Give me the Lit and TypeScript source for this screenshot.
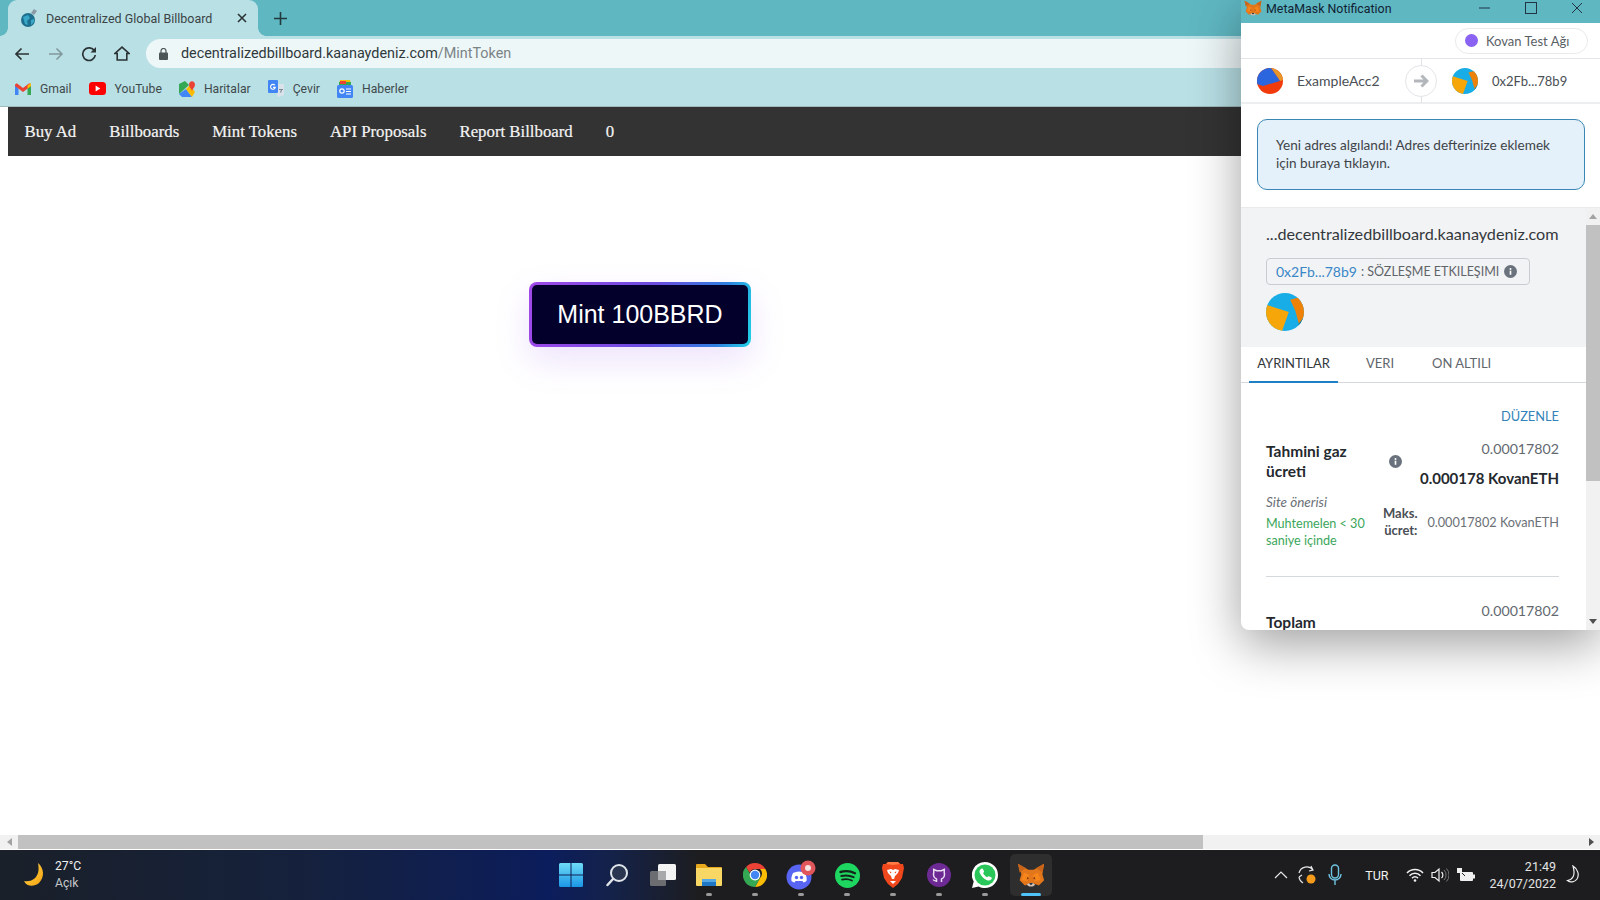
import { LitElement, html, css } from 'lit';
import { customElement } from 'lit/decorators.js';

const fox = (s: number) => html`<svg width=${s} height=${s} viewBox="0 0 32 32">
  <path fill="#e2761b" d="M1 3l12 7h6l12-7-2 12 2 7-6 6-5-2h-6l-5 2-6-6 2-7z" />
  <path fill="#c9651a" d="M1 3l9 5-7 5zM31 3l-9 5 7 5z" />
  <path fill="#f6851b" d="M8 13l6 3-2 7-7-1zM24 13l-6 3 2 7 7-1z" />
  <path fill="#763d16" d="M12 18l2 2-3 1zM20 18l-2 2 3 1z" />
  <path fill="#e4761b" d="M14 15h4l1 7h-6z" />
  <path fill="#d7c1b3" d="M11 27l3 2h4l3-2-3-2h-4z" />
  <path fill="#233447" d="M14 25h4l-1 2h-2z" />
</svg>`;

const infoIcon = (s: number) => html`<svg width=${s} height=${s} viewBox="0 0 16 16">
  <circle cx="8" cy="8" r="8" fill="#6a737d" />
  <rect x="7" y="7" width="2" height="5" fill="#fff" />
  <circle cx="8" cy="4.8" r="1.2" fill="#fff" />
</svg>`;

const srcAvatar = html`<svg width="26" height="26" viewBox="0 0 26 26">
  <defs><clipPath id="a1"><circle cx="13" cy="13" r="13" /></clipPath></defs>
  <g clip-path="url(#a1)">
    <rect width="26" height="26" fill="#f23b0c" />
    <path fill="#e8952a" d="M14 0h12v12l-3 1z" />
    <path fill="#2b66de" d="M0 0h14l9 13-17 5-6-2z" />
  </g>
</svg>`;

const destAvatar = (s: number, id: string) => html`<svg width=${s} height=${s} viewBox="0 0 26 26">
  <defs><clipPath id=${id}><circle cx="13" cy="13" r="13" /></clipPath></defs>
  <g clip-path="url(#${id})">
    <rect width="26" height="26" fill="#18ade6" />
    <path fill="#f6a609" d="M0 8l15.600 5L11 26H0z" />
    <path fill="#ee8208" d="M16.500 4.600L26 2v14.500L22.500 21 20 12z" />
    <path fill="#0f6e8c" d="M22.500 21L26 16.500V20l-4 2z" />
  </g>
</svg>`;

const favicon = html`<svg width="18" height="20" viewBox="0 0 18 20">
  <circle cx="8" cy="12" r="7" fill="#1d6f8f" />
  <path fill="#39a7c6" d="M3 9l5-2 2 3-3 3 1 4-3-1zM11 12l3-1 0 3-3 3z" />
  <path fill="#8a9aa4" d="M11 5l3-4 3 2-3 4z" />
</svg>`;

const gmail = html`<svg width="16" height="12" viewBox="0 0 16 12">
  <path fill="#4285f4" d="M0 2v10h3.500V5z" />
  <path fill="#34a853" d="M16 2v10h-3.500V5z" />
  <path fill="#ea4335" d="M0 1.500L1.800.3 8 5 14.200.3 16 1.500v1.600L8 9 0 3.100z" />
  <path fill="#fbbc04" d="M12.500 2.400L16 0v3.100L12.500 5.700z" />
</svg>`;

const youtube = html`<svg width="17" height="13" viewBox="0 0 18 13" preserveAspectRatio="none">
  <rect width="18" height="13" rx="3.500" fill="#f00" />
  <path fill="#fff" d="M7 3.500v6l5-3z" />
</svg>`;

const maps = html`<svg width="16" height="16" viewBox="0 0 16 16">
  <path fill="#34a853" d="M0 3l6-3 4 4-10 9z" />
  <path fill="#4285f4" d="M0 13l7-5 6 8H3z" />
  <path fill="#fbbc04" d="M7 8l4-4 5 7-3 5z" />
  <path fill="#ea4335" d="M10 4c0-5 6-5 6 0 0 2-2 3-3 6-1-3-3-4-3-6z" />
</svg>`;

const translate = html`<svg width="16" height="17" viewBox="0 0 16 17">
  <path fill="#dbe3ea" d="M6 4h10v11l-6 2z" />
  <rect width="10" height="13" rx="1" fill="#4285f4" />
  <path fill="none" stroke="#fff" stroke-width="1.100" d="M6.800 5.200A2.400 2.400 0 1 0 7.300 7.400H5" />
  <path fill="#7a8794" d="M11 9h4v1h-1l-1 3-1-1 1-2h-2z" />
</svg>`;

const news = html`<svg width="16" height="18" viewBox="0 0 16 18">
  <path fill="#fbbc04" d="M3 0h10l1 5H2z" />
  <path fill="#34a853" d="M2 2h12v3H2z" />
  <path fill="#ea4335" d="M3 1h6v3H3z" />
  <rect y="5" width="16" height="13" rx="1.500" fill="#4285f4" />
  <circle cx="5" cy="11" r="2.200" fill="none" stroke="#fff" stroke-width="1.200" />
  <path stroke="#fff" stroke-width="1.200" d="M9 9h5M9 11.500h5M9 14h5" />
</svg>`;

const winLogo = html`<svg width="24" height="24" viewBox="0 0 24 24">
  <defs><linearGradient id="w" x1="0" y1="0" x2="0" y2="1"><stop offset="0" stop-color="#6fdcf7" /><stop offset="1" stop-color="#1b96e6" /></linearGradient></defs>
  <path fill="url(#w)" d="M0 1.500A1.500 1.500 0 0 1 1.500 0h10v11.500H0zM12.500 0h10A1.500 1.500 0 0 1 24 1.500v10H12.500zM0 12.500h11.500V24h-10A1.500 1.500 0 0 1 0 22.500zM12.500 12.500H24v10a1.500 1.500 0 0 1-1.500 1.500h-10z" />
</svg>`;

const search = html`<svg width="24" height="24" viewBox="0 0 24 24">
  <circle cx="14" cy="10" r="8" fill="#2a3550" stroke="#dfe5ea" stroke-width="2" />
  <path d="M8 16l-5.500 6" stroke="#dfe5ea" stroke-width="2.500" stroke-linecap="round" />
</svg>`;

const taskView = html`<svg width="26" height="22" viewBox="0 0 26 22">
  <rect x="0" y="7" width="16" height="15" rx="1.500" fill="#6b6d70" />
  <rect x="8" y="0" width="18" height="16" rx="1.500" fill="#f3f3f3" />
  <rect x="8" y="7" width="8" height="9" fill="#a6a8aa" />
</svg>`;

const files = html`<svg width="26" height="24" viewBox="0 0 26 24">
  <path fill="#e8a91c" d="M0 2a1 1 0 0 1 1-1h8l3 3h13a1 1 0 0 1 1 1v3H0z" />
  <path fill="#f8d765" d="M0 5h26v17a1 1 0 0 1-1 1H1a1 1 0 0 1-1-1z" />
  <path fill="#1f76c4" d="M6 16h14v7H6z" />
  <path fill="#54a8e4" d="M6 16h14v3H6z" />
</svg>`;

const chrome = html`<svg width="24" height="24" viewBox="0 0 24 24">
  <path fill="#ea4335" d="M12 0a12 12 0 0 1 10.400 6H12a6 6 0 0 0-5.500 3.600L3 4a12 12 0 0 1 9-4z" />
  <path fill="#fbbc04" d="M22.400 6A12 12 0 0 1 12 24l5-9a6 6 0 0 0 0-9z" />
  <path fill="#34a853" d="M3 4l6 10a6 6 0 0 0 8 1l-5 9A12 12 0 0 1 3 4z" />
  <circle cx="12" cy="12" r="5.400" fill="#fff" />
  <circle cx="12" cy="12" r="4.200" fill="#4285f4" />
</svg>`;

const discord = html`<svg width="30" height="30" viewBox="0 0 30 30">
  <circle cx="13" cy="17" r="12.500" fill="#5865f2" />
  <path fill="#fff" d="M7 13c4-2 8-2 12 0 1.500 3 2 5.500 1.500 8-1 .8-2 1.200-3 1.400l-1-1.400h-7l-1 1.400c-1-.2-2-.6-3-1.400-.5-2.500 0-5 1.500-8z" />
  <circle cx="10.500" cy="17.500" r="1.700" fill="#5865f2" />
  <circle cx="15.500" cy="17.500" r="1.700" fill="#5865f2" />
  <circle cx="22" cy="8" r="7.500" fill="#e0565b" />
  <circle cx="22" cy="8" r="3" fill="#f6e3e3" />
</svg>`;

const spotify = html`<svg width="25" height="25" viewBox="0 0 25 25">
  <circle cx="12.500" cy="12.500" r="12.500" fill="#1ed760" />
  <path fill="none" stroke="#14241a" stroke-linecap="round" stroke-width="2.400" d="M5.500 9c5-1.400 10-1 14.500 1.300" />
  <path fill="none" stroke="#14241a" stroke-linecap="round" stroke-width="2" d="M6.300 13c4.300-1.100 8.500-.7 12.300 1.200" />
  <path fill="none" stroke="#14241a" stroke-linecap="round" stroke-width="1.700" d="M7 16.600c3.500-.8 7-.5 10 1" />
</svg>`;

const brave = html`<svg width="22" height="26" viewBox="0 0 22 26">
  <path fill="#f1471d" d="M6 0h10l2 2 3 0 1 4-2 10-4 6-5 4-5-4-4-6L0 6l1-4 3 0z" />
  <path fill="#ff7a45" d="M6 0h10l2 2-7 1-7-1z" />
  <path fill="#fff" d="M5 8l4-1 2 1 2-1 4 1-1 3-3 3-1 3h-2l-1-3-3-3z" />
  <path fill="#f1471d" d="M7.500 9.500l2 .5-1 1.500zM14.500 9.500l-2 .5 1 1.500z" />
  <path fill="#fff" d="M8 19h6l-3 3z" />
</svg>`;

const github = html`<svg width="24" height="24" viewBox="0 0 24 24">
  <circle cx="12" cy="12" r="12" fill="#6e2a94" />
  <path fill="none" stroke="#e9dff0" stroke-width="1.500" d="M9.500 19v-3c-3-1-3.500-4.500-2.700-6.500L6.700 6.500l3 1.300h4.600l3-1.300-.1 3c.8 2 .3 5.500-2.700 6.500v3" />
  <path fill="none" stroke="#e9dff0" stroke-width="1.200" d="M6 16.500c1 1.500 2 1.500 3.500 1.200" />
</svg>`;

const whatsapp = html`<svg width="26" height="26" viewBox="0 0 26 26">
  <path fill="#fff" d="M13 0a13 13 0 0 1 0 26c-2.300 0-4.400-.6-6.300-1.600L0 26l1.700-6.500A13 13 0 0 1 13 0z" />
  <circle cx="13" cy="13" r="10.500" fill="#29c65a" />
  <path fill="#fff" d="M9 7c1-.8 1.700-.6 2.100.3l.9 2c.2.500 0 1-.9 1.900.9 1.800 2.200 3.100 4 4 .9-.9 1.400-1.100 1.900-.9l2 .9c.9.400 1.100 1.100.3 2.100-1 1.300-2.500 1.600-4.300.9C11.600 16.800 9.200 14.400 7.800 11 7.100 9.500 7.700 8 9 7z" />
</svg>`;

const moon = html`<svg width="22" height="24" viewBox="0 0 22 24">
  <defs><linearGradient id="m" x1="0" y1="0" x2="1" y2="1"><stop offset="0" stop-color="#ffd84d" /><stop offset="1" stop-color="#f5a10f" /></linearGradient></defs>
  <path fill="url(#m)" d="M14 0c6 5 7 14 1 20-5 4-12 4-15-2 7 1 12-2 14-8 .800-3 .800-6 0-10z" />
</svg>`;

const trayChevron = html`<svg width="14" height="8" viewBox="0 0 14 8"><path d="M1 7l6-6 6 6" fill="none" stroke="#e8e8e8" stroke-width="1.200" /></svg>`;
const traySync = html`<svg width="22" height="22" viewBox="0 0 22 22">
  <path d="M2 9a8 8 0 0 1 14-3M14 2l2 4-4 1M2 13a8 8 0 0 0 4 6M2 13l3-2" fill="none" stroke="#e5e5e5" stroke-width="1.200" />
  <circle cx="14" cy="15" r="4.500" fill="#f59b1c" />
</svg>`;
const trayMic = html`<svg width="14" height="22" viewBox="0 0 14 22">
  <rect x="3.500" y="1" width="7" height="13" rx="3.500" fill="none" stroke="#6fc3e0" stroke-width="1.400" />
  <path d="M1 10a6 6 0 0 0 12 0M7 16v5" fill="none" stroke="#6fc3e0" stroke-width="1.400" />
</svg>`;
const trayWifi = html`<svg width="18" height="14" viewBox="0 0 18 14">
  <path d="M1 5a11 11 0 0 1 16 0M3.500 7.700a7.500 7.500 0 0 1 11 0M6 10.200a4 4 0 0 1 6 0" fill="none" stroke="#f0f0f0" stroke-width="1.500" />
  <circle cx="9" cy="12.500" r="1.300" fill="#f0f0f0" />
</svg>`;
const traySound = html`<svg width="18" height="16" viewBox="0 0 18 16">
  <path d="M1 5.500h3l4-3.500v12l-4-3.500H1z" fill="none" stroke="#f0f0f0" stroke-width="1.200" />
  <path d="M10.500 5a4 4 0 0 1 0 6" fill="none" stroke="#f0f0f0" stroke-width="1.200" />
  <path d="M13 3a7 7 0 0 1 0 10M15.500 1.500a9.500 9.500 0 0 1 0 13" fill="none" stroke="#777" stroke-width="1" />
</svg>`;
const trayBattery = html`<svg width="18" height="14" viewBox="0 0 18 14">
  <rect x="3" y="4" width="13" height="9" rx="1" fill="#f0f0f0" />
  <rect x="16" y="6.500" width="2" height="4" fill="#f0f0f0" />
  <rect x="0" y="0" width="5" height="5" fill="#f0f0f0" />
  <path d="M5 5l3 3" stroke="#222" stroke-width="1" />
</svg>`;
const trayNight = html`<svg width="16" height="20" viewBox="0 0 16 20">
  <path d="M7 1c5 3 6.500 9 4 13-2 3-6.500 4-9.500 1.500C6 15 10 11 7 1z" fill="none" stroke="#f0f0f0" stroke-width="1.200" />
</svg>`;

const apps = [
  winLogo, search, taskView, files, chrome, discord, spotify, brave, github, whatsapp,
];
const navItems = ['Buy Ad', 'Billboards', 'Mint Tokens', 'API Proposals', 'Report Billboard', '0'];

@customElement('app-root')
export class AppRoot extends LitElement {
  static override styles = css`
    :host {
      display: block;
      position: relative;
      width: 1600px;
      height: 900px;
      overflow: hidden;
      background: #fff;
      font-family: 'Roboto', 'Noto Sans', sans-serif;
    }

    .screen {
      display: flex;
      flex-direction: column;
      height: 900px;
    }

    /* browser chrome */
    .tabstrip {
      display: flex;
      align-items: stretch;
      height: 36px;
      padding-left: 8px;
      background: #5fb7c2;
    }
    .tab {
      position: relative;
      display: flex;
      align-items: center;
      width: 250px;
      padding: 0 11px 0 12px;
      box-sizing: border-box;
      gap: 8px;
      border-radius: 9px 9px 0 0;
      background: #b9e0e5;
      color: #3a4446;
      font-size: 12.5px;
    }
    .tab::before,
    .tab::after {
      content: '';
      position: absolute;
      bottom: 0;
      width: 8px;
      height: 8px;
    }
    .tab::before {
      left: -8px;
      background: radial-gradient(circle at 0 0, transparent 7.500px, #b9e0e5 8px);
    }
    .tab::after {
      right: -8px;
      background: radial-gradient(circle at 100% 0, transparent 7.500px, #b9e0e5 8px);
    }
    .tab span {
      flex: 1;
      white-space: nowrap;
    }
    .newtab {
      display: flex;
      align-items: center;
      margin-left: 16px;
    }
    .toolbar {
      display: flex;
      align-items: center;
      height: 35px;
      padding-left: 14px;
      background: #b9e0e5;
    }
    .tbtn {
      display: flex;
      justify-content: center;
      width: 33.300px;
    }
    .tbtn.first {
      justify-content: flex-start;
      width: 25px;
    }
    .omnibox {
      flex: 1;
      display: flex;
      align-items: center;
      gap: 13px;
      height: 29px;
      margin-left: 7px;
      padding-left: 13px;
      border-radius: 15px 0 0 15px;
      background: #eef7f8;
      font-size: 14.400px;
      color: #2f3a3c;
    }
    .omnibox i {
      font-style: normal;
      color: #7b8486;
    }
    .bookmarks {
      display: flex;
      align-items: center;
      height: 35px;
      padding-left: 15px;
      background: #b9e0e5;
      font-size: 12.200px;
      color: #3f4a4c;
    }
    .bm {
      display: flex;
      align-items: center;
      gap: 9px;
      margin-right: 17px;
    }

    /* page */
    .page {
      flex: 1;
      min-height: 0;
      border-top: 1px solid #9fb8bc;
      padding-left: 8px;
      background: #fff;
    }
    .nav {
      display: flex;
      align-items: center;
      height: 48px;
      padding: 1px 0 0 16.500px;
      gap: 33px;
      background: #333;
      color: #f4f4f4;
      font-family: 'Liberation Serif', serif;
      font-size: 16.800px;
      -webkit-text-stroke: 0.2px #f4f4f4;
    }
    .stage {
      display: flex;
      justify-content: flex-start;
      padding: 126px 0 0 521px;
    }
    .mint {
      display: flex;
      align-items: center;
      justify-content: center;
      width: 222px;
      height: 65px;
      box-sizing: border-box;
      padding: 3px;
      border-radius: 8px;
      background: linear-gradient(100deg, #a149e8 0%, #6a4ce0 55%, #2f7fe0 85%, #20d2e6 100%);
      box-shadow: 0 14px 34px rgba(150, 90, 240, 0.17);
    }
    .mint span {
      display: flex;
      align-items: center;
      justify-content: center;
      width: 100%;
      height: 100%;
      border-radius: 5px;
      background: #03012c;
      color: #fff;
      font-family: 'Liberation Sans', sans-serif;
      font-size: 25px;
    }

    .hscroll {
      display: flex;
      align-items: center;
      height: 14px;
      background: #f1f1f1;
      border-bottom: 1px solid #fff;
    }
    .hscroll b {
      display: flex;
      align-items: center;
      justify-content: center;
      width: 18px;
      height: 100%;
    }
    .hscroll em {
      display: block;
      width: 1185px;
      height: 100%;
      background: #c1c1c1;
    }
    .hscroll u {
      flex: 1;
    }

    /* taskbar */
    .taskbar {
      display: grid;
      grid-template-columns: 1fr auto 1fr;
      align-items: center;
      height: 50px;
      background: linear-gradient(90deg, #1a2029 0, #15213c 300px, #0b1d5c 550px, #14224a 610px, #1d1d1f 700px);
      color: #f2f2f2;
    }
    .weather {
      display: flex;
      align-items: center;
      gap: 9px;
      padding-left: 24px;
    }
    .weather div {
      font-size: 12.200px;
      line-height: 17px;
    }
    .weather small {
      display: block;
      font-size: 12.200px;
      color: #c4c6c8;
    }
    .apps {
      display: flex;
      align-items: center;
    }
    .slot {
      position: relative;
      display: flex;
      align-items: center;
      justify-content: center;
      width: 46px;
      height: 42px;
      border-radius: 5px;
    }
    .slot.running::after {
      content: '';
      position: absolute;
      bottom: 0;
      width: 6px;
      height: 3px;
      border-radius: 2px;
      background: #9a9a9a;
    }
    .slot.active {
      width: 42px;
      margin-left: 2px;
      background: #2e2e2e;
    }
    .slot.active::after {
      width: 20px;
      background: #4fc3f7;
    }
    .tray {
      display: flex;
      align-items: center;
      justify-content: flex-end;
      padding-right: 18px;
      font-size: 12.5px;
    }
    .tray .sync {
      display: flex;
      margin: 0 9px 0 9px;
    }
    .tray .lang {
      margin: 0 18px 0 23px;
    }
    .tray .sound {
      display: flex;
      margin: 0 8px 0 7px;
    }
    .clock {
      margin: 0 10px 0 14px;
      text-align: right;
      line-height: 17px;
      font-size: 12.500px;
      color: #e4e4e4;
    }

    /* metamask window */
    .mm {
      position: absolute;
      left: 1241px;
      top: 0;
      display: flex;
      flex-direction: column;
      width: 359px;
      height: 630px;
      overflow: hidden;
      border-radius: 0 0 0 8px;
      background: #fff;
      box-shadow: 0 14px 50px rgba(0, 0, 0, 0.38);
      font-family: 'Lato', 'Noto Sans', sans-serif;
      color: #24292e;
    }
    .mm-title {
      display: flex;
      align-items: center;
      height: 16px;
      padding-bottom: 7px;
      flex: none;
      gap: 4px;
      padding-left: 3px;
      padding-right: 17px;
      background: #5fb7c2;
      color: #123;
      font-size: 12.400px;
      font-family: 'Roboto', sans-serif;
    }
    .mm-title span {
      flex: 1;
    }
    .mm-title .ctl-min {
      margin-right: 31px;
    }
    .mm-title .ctl-max {
      margin-right: 30px;
    }
    .mm-net {
      display: flex;
      justify-content: flex-end;
      align-items: center;
      flex: none;
      height: 35px;
      padding-right: 12px;
      border-bottom: 1px solid #e3e5e8;
    }
    .pill {
      display: flex;
      align-items: center;
      gap: 8px;
      width: 133px;
      height: 26px;
      box-sizing: border-box;
      padding-left: 9px;
      border: 1px solid #e9eaec;
      border-radius: 14px;
      font-size: 13px;
      color: #5a5f65;
    }
    .pill i {
      width: 13px;
      height: 13px;
      border-radius: 50%;
      background: #8a63f2;
    }
    .mm-acc {
      display: flex;
      align-items: center;
      flex: none;
      height: 43px;
      padding-left: 16px;
      border-bottom: 2px solid #eceef0;
      font-size: 14px;
      color: #4a4f55;
    }
    .acc-name {
      width: 105px;
      margin-left: 14px;
    }
    .acc-arrow {
      position: relative;
      display: flex;
      align-items: center;
      justify-content: center;
      width: 32px;
      height: 32px;
      margin: 0 15px 0 3px;
      box-sizing: border-box;
      border: 1px solid #e3e5e8;
      border-radius: 50%;
      background: #fff;
    }
    .acc-arrow::before,
    .acc-arrow::after {
      content: '';
      position: absolute;
      left: 15px;
      width: 1px;
      height: 6px;
      background: #dfe1e4;
    }
    .acc-arrow::before {
      top: -7px;
    }
    .acc-arrow::after {
      bottom: -7px;
    }
    .acc-dest {
      margin-left: 14px;
      font-size: 13px;
    }
    .mm-alert-wrap {
      flex: none;
      padding: 15px 15px 17px 16px;
      border-bottom: 1px solid #e8eaec;
    }
    .mm-alert {
      height: 71px;
      box-sizing: border-box;
      padding: 16px 18px 0;
      border: 1px solid #3a87b5;
      border-radius: 10px;
      background: #e4f0fa;
      font-size: 13.600px;
      line-height: 18px;
      color: #3f4448;
    }
    .mm-body {
      flex: 1;
      min-height: 0;
      display: flex;
    }
    .mm-content {
      flex: 1;
      min-width: 0;
      overflow: hidden;
    }
    .vscroll {
      display: flex;
      flex-direction: column;
      align-items: center;
      justify-content: space-between;
      flex: none;
      width: 14px;
      background: #f1f1f1;
    }
    .vscroll b {
      display: flex;
      align-items: center;
      justify-content: center;
      height: 17px;
    }
    .vscroll em {
      display: block;
      width: 100%;
      height: 256px;
      background: #c1c1c1;
    }
    .vscroll u {
      flex: 1;
    }
    .hero {
      height: 139px;
      padding: 15px 26px 0 25px;
      box-sizing: border-box;
      background: #f2f3f4;
    }
    .domain {
      font-size: 16.200px;
      line-height: 22px;
      color: #33383c;
      white-space: nowrap;
    }
    .tag {
      display: flex;
      align-items: center;
      gap: 4px;
      width: 264px;
      height: 27px;
      box-sizing: border-box;
      margin-top: 13px;
      padding-left: 9px;
      border: 1px solid #c9cdd2;
      border-radius: 4px;
      font-size: 12.500px;
      color: #5f656b;
      white-space: nowrap;
    }
    .tag a {
      color: #3a87c8;
      font-size: 14px;
    }
    .tag svg {
      margin-left: 1px;
    }
    .hero-av {
      margin-top: 8px;
    }
    .tabs {
      display: flex;
      height: 36px;
      box-sizing: border-box;
      padding: 0 0 0 8px;
      gap: 8px;
      border-bottom: 1px solid #d6d9dc;
      font-size: 13px;
      color: #5f666c;
    }
    .tabs div {
      display: flex;
      align-items: center;
      padding: 0 10px 3px;
    }
    .tabs div + div {
      margin-left: 10px;
    }
    .tabs .on {
      width: 89px;
      box-sizing: border-box;
      justify-content: center;
      padding: 0 0 2px;
      color: #33383c;
      border-bottom: 2px solid #1f7fc4;
      margin-bottom: -1px;
    }
    .details {
      padding: 25px 27px 0 25px;
    }
    .edit {
      text-align: right;
      font-size: 12.800px;
      line-height: 16px;
      color: #3283b9;
    }
    .gas {
      display: grid;
      grid-template-columns: 110px 1fr;
      margin-top: 15px;
    }
    .gas-l {
      display: flex;
      align-items: center;
      justify-content: space-between;
      width: 136px;
      margin-top: -5px;
      font-size: 15.500px;
      font-weight: 700;
      line-height: 20px;
      color: #24292e;
    }
    .gas-r {
      text-align: right;
      font-size: 14.200px;
      color: #63696f;
      line-height: 20px;
    }
    .gas-r b {
      display: block;
      margin-top: 9px;
      color: #24292e;
      font-size: 15px;
    }
    .sub {
      display: grid;
      grid-template-columns: 112px 1fr;
      margin-top: 6px;
    }
    .sub-l {
      font-size: 12.600px;
      line-height: 17.500px;
      color: #3aa65a;
    }
    .sub-l i {
      display: block;
      margin-bottom: 3px;
      font-size: 13.500px;
      color: #6a7076;
    }
    .sub-r {
      display: flex;
      align-items: center;
      justify-content: space-between;
      padding-left: 5px;
      font-size: 12.700px;
      color: #6a7076;
    }
    .sub-r b {
      text-align: right;
      font-size: 13px;
      line-height: 17px;
      color: #4a4f55;
    }
    .mm-rule {
      height: 1px;
      margin-top: 26px;
      background: #d6d9dc;
    }
    .total {
      display: flex;
      justify-content: space-between;
      margin-top: 24px;
      font-size: 14.200px;
      line-height: 20px;
      color: #63696f;
    }
    .total b {
      padding-top: 11px;
      font-size: 15.500px;
      color: #24292e;
    }
  `;

  private _nav() {
    return html`<div class="toolbar">
      <div class="tbtn first">
        <svg width="16" height="14" viewBox="0 0 16 14"><path d="M15 7H2M7.500 1.500L2 7l5.500 5.500" fill="none" stroke="#2b3335" stroke-width="1.700" /></svg>
      </div>
      <div class="tbtn">
        <svg width="16" height="14" viewBox="0 0 16 14"><path d="M1 7h13M8.500 1.500L14 7l-5.500 5.500" fill="none" stroke="#82979b" stroke-width="1.500" /></svg>
      </div>
      <div class="tbtn">
        <svg width="16" height="16" viewBox="0 0 16 16"><path d="M13.500 5A6.300 6.300 0 1 0 14.300 9" fill="none" stroke="#2b3335" stroke-width="1.700" /><path d="M15 1v5.500H9.500z" fill="#2b3335" /></svg>
      </div>
      <div class="tbtn">
        <svg width="16" height="15" viewBox="0 0 16 15"><path d="M8 1.200L1 7.500h2.200V14h9.600V7.500H15z" fill="none" stroke="#2b3335" stroke-width="1.600" /></svg>
      </div>
      <div class="omnibox">
        <svg width="9" height="12" viewBox="0 0 9 12"><rect y="4.500" width="9" height="7.500" rx="1" fill="#4b5557" /><path d="M2 5V3a2.500 2.500 0 0 1 5 0v2" fill="none" stroke="#4b5557" stroke-width="1.200" /></svg>
        <span>decentralizedbillboard.kaanaydeniz.com<i>/MintToken</i></span>
      </div>
    </div>`;
  }

  private _metamask() {
    return html`<div class="mm">
      <div class="mm-title">
        ${fox(18)}
        <span>MetaMask Notification</span>
        <svg class="ctl-min" width="11" height="10" viewBox="0 0 11 10"><path d="M0 5h11" stroke="#234" /></svg>
        <svg class="ctl-max" width="12" height="12" viewBox="0 0 12 12"><rect x=".5" y=".5" width="11" height="11" fill="none" stroke="#234" /></svg>
        <svg width="12" height="12" viewBox="0 0 12 12"><path d="M1 1l10 10M11 1L1 11" stroke="#234" /></svg>
      </div>
      <div class="mm-net">
        <div class="pill"><i></i>Kovan Test Ağı</div>
      </div>
      <div class="mm-acc">
        ${srcAvatar}
        <span class="acc-name">ExampleAcc2</span>
        <div class="acc-arrow">
          <svg width="16" height="14" viewBox="0 0 16 14"><path d="M1 7h13M8.500 1.500L14 7l-5.500 5.500" fill="none" stroke="#b3b6ba" stroke-width="3" /></svg>
        </div>
        ${destAvatar(26, 'a2')}
        <span class="acc-dest">0x2Fb...78b9</span>
      </div>
      <div class="mm-alert-wrap">
        <div class="mm-alert">Yeni adres algılandı! Adres defterinize eklemek için buraya tıklayın.</div>
      </div>
      <div class="mm-body">
        <div class="mm-content">
          <div class="hero">
            <div class="domain">...decentralizedbillboard.kaanaydeniz.com</div>
            <div class="tag"><a>0x2Fb...78b9</a> : SÖZLEŞME ETKILEŞIMI ${infoIcon(13)}</div>
            <div class="hero-av">${destAvatar(38, 'a3')}</div>
          </div>
          <div class="tabs">
            <div class="on">AYRINTILAR</div>
            <div>VERI</div>
            <div>ON ALTILI</div>
          </div>
          <div class="details">
            <div class="edit">DÜZENLE</div>
            <div class="gas">
              <div class="gas-l">
                <span>Tahmini gaz<br />ücreti</span>
                ${infoIcon(13)}
              </div>
              <div class="gas-r">0.00017802<b>0.000178 KovanETH</b></div>
            </div>
            <div class="sub">
              <div class="sub-l"><i>Site önerisi</i>Muhtemelen &lt; 30 saniye içinde</div>
              <div class="sub-r"><b>Maks.<br />ücret:</b><span>0.00017802 KovanETH</span></div>
            </div>
            <div class="mm-rule"></div>
            <div class="total"><b>Toplam</b><span>0.00017802</span></div>
          </div>
        </div>
        <div class="vscroll">
          <b><svg width="8" height="5" viewBox="0 0 8 5"><path d="M4 0l4 5H0z" fill="#a3a3a3" /></svg></b>
          <em></em>
          <u></u>
          <b><svg width="8" height="5" viewBox="0 0 8 5"><path d="M0 0h8L4 5z" fill="#505050" /></svg></b>
        </div>
      </div>
    </div>`;
  }

  protected override render() {
    return html`
      <div class="screen">
        <div class="tabstrip">
          <div class="tab">
            ${favicon}
            <span>Decentralized Global Billboard</span>
            <svg width="10" height="10" viewBox="0 0 10 10"><path d="M1 1l8 8M9 1L1 9" stroke="#2b3335" stroke-width="1.600" /></svg>
          </div>
          <div class="newtab">
            <svg width="13" height="13" viewBox="0 0 13 13"><path d="M6.500 0v13M0 6.500h13" stroke="#22393d" stroke-width="1.600" /></svg>
          </div>
        </div>
        ${this._nav()}
        <div class="bookmarks">
          <div class="bm">${gmail}Gmail</div>
          <div class="bm">${youtube}YouTube</div>
          <div class="bm">${maps}Haritalar</div>
          <div class="bm">${translate}Çevir</div>
          <div class="bm">${news}Haberler</div>
        </div>
        <div class="page">
          <div class="nav">${navItems.map((n) => html`<span>${n}</span>`)}</div>
          <div class="stage">
            <div class="mint"><span>Mint 100BBRD</span></div>
          </div>
        </div>
        <div class="hscroll">
          <b><svg width="5" height="8" viewBox="0 0 5 8"><path d="M5 0v8L0 4z" fill="#a3a3a3" /></svg></b>
          <em></em>
          <u></u>
          <b><svg width="5" height="8" viewBox="0 0 5 8"><path d="M0 0v8l5-4z" fill="#505050" /></svg></b>
        </div>
        <div class="taskbar">
          <div class="weather">
            ${moon}
            <div>27°C<small>Açık</small></div>
          </div>
          <div class="apps">
            ${apps.map(
              (a, i) => html`<div class="slot ${i > 2 ? 'running' : ''}">${a}</div>`,
            )}
            <div class="slot running active">${fox(28)}</div>
          </div>
          <div class="tray">
            ${trayChevron}
            <span class="sync">${traySync}</span>
            ${trayMic}
            <span class="lang">TUR</span>
            ${trayWifi}
            <span class="sound">${traySound}</span>
            ${trayBattery}
            <div class="clock">21:49<br />24/07/2022</div>
            ${trayNight}
          </div>
        </div>
      </div>
      ${this._metamask()}
    `;
  }
}

declare global {
  interface HTMLElementTagNameMap {
    'app-root': AppRoot;
  }
}
